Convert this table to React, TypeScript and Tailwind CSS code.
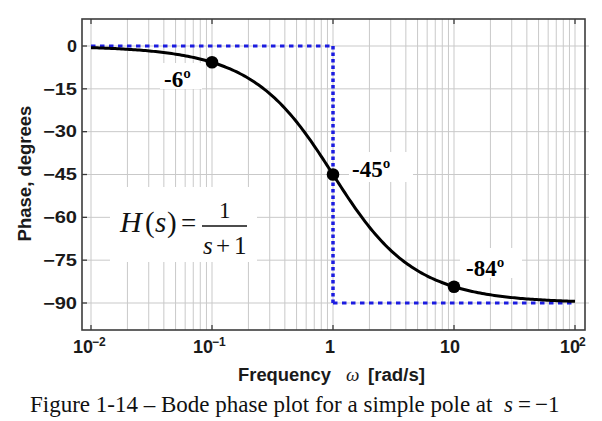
import React from "react";

const X = (w: number) => 91 + 121 * (Math.log10(w) + 2);
const Y = (deg: number) => 46 + (-deg * 257) / 90;

const sans = "'Liberation Sans', Arial, sans-serif";
const serif = "'Liberation Serif', 'Times New Roman', serif";

function Chart() {
  const vlines: number[] = [];
  for (let k = -2; k <= 1; k++) {
    for (let m = 1; m <= 9; m++) vlines.push(X(m * Math.pow(10, k)));
  }
  vlines.push(X(100));
  const majors = [0.01, 0.1, 1, 10, 100].map(X);
  const degs = [0, -15, -30, -45, -60, -75, -90];

  let d = "";
  for (let i = 0; i <= 240; i++) {
    const lw = -2 + (4 * i) / 240;
    const w = Math.pow(10, lw);
    const ph = (-Math.atan(w) * 180) / Math.PI;
    d += (i === 0 ? "M" : "L") + X(w).toFixed(2) + " " + Y(ph).toFixed(2) + " ";
  }
  const dots = [0.1, 1, 10].map((w) => ({ x: X(w), y: Y((-Math.atan(w) * 180) / Math.PI) }));

  return (
    <svg width={602} height={393} viewBox="0 0 602 393" className="block">
      <rect x={0} y={0} width={602} height={393} fill="#ffffff" />
      {/* grid */}
      {vlines.map((x, i) => (
        <line key={"v" + i} x1={x} y1={19} x2={x} y2={330} stroke="#c9c9c9" strokeWidth={1} />
      ))}
      {degs.map((g) => (
        <line key={"h" + g} x1={82} y1={Y(g)} x2={589} y2={Y(g)} stroke="#c9c9c9" strokeWidth={1} />
      ))}
      {/* frame */}
      <rect x={82} y={19} width={503} height={311} fill="none" stroke="#3c3c3c" strokeWidth={1.6} />
      {degs.map((g) => (
        <line key={"t" + g} x1={82} y1={Y(g)} x2={87} y2={Y(g)} stroke="#3c3c3c" strokeWidth={1.3} />
      ))}
      {majors.map((x, i) => (
        <g key={"m" + i}>
          <line x1={x} y1={19} x2={x} y2={24} stroke="#3c3c3c" strokeWidth={1.3} />
          <line x1={x} y1={325} x2={x} y2={330} stroke="#3c3c3c" strokeWidth={1.3} />
        </g>
      ))}
      {/* label boxes */}
      <rect x={110} y={187} width={147} height={75} fill="#ffffff" />
      <rect x={160} y={63} width={42} height={26} fill="#ffffff" />
      <rect x={349} y={152} width={64} height={30} fill="#ffffff" />
      <rect x={460} y={248} width={62} height={30} fill="#ffffff" />
      {/* asymptote */}
      <line x1={91} y1={Y(0)} x2={333} y2={Y(0)} stroke="#1c1ce0" strokeWidth={3} strokeDasharray="4.5 4.5" />
      <line x1={333} y1={Y(0)} x2={333} y2={Y(-90)} stroke="#1c1ce0" strokeWidth={3.5} strokeDasharray="3.5 3" />
      <line x1={333} y1={Y(-90)} x2={575} y2={Y(-90)} stroke="#1c1ce0" strokeWidth={3} strokeDasharray="4.5 4.5" />
      {/* curve */}
      <path d={d} fill="none" stroke="#000000" strokeWidth={3} strokeLinejoin="round" />
      {dots.map((p, i) => (
        <circle key={"d" + i} cx={p.x} cy={p.y} r={6.3} fill="#000000" />
      ))}
      {/* y tick labels */}
      {degs.map((g) => (
        <text
          key={"yl" + g}
          x={77}
          y={Y(g) + 5.7}
          textAnchor="end"
          fontFamily={sans}
          fontWeight={700}
          fontSize={16}
          fill="#1a1a1a"
          textLength={g === 0 ? 10 : 34}
          lengthAdjust="spacingAndGlyphs"
        >
          {g === 0 ? "0" : "\u2212" + String(-g)}
        </text>
      ))}
      {/* y axis title */}
      <text
        x={0}
        y={0}
        transform="translate(31 173.5) rotate(-90)"
        textAnchor="middle"
        fontFamily={sans}
        fontWeight={700}
        fontSize={18.5}
        fill="#1a1a1a"
      >
        Phase, degrees
      </text>
      {/* x tick labels */}
      <g fontFamily={sans} fontWeight={700} fill="#1a1a1a">
        <text x={73} y={353} fontSize={18}>10</text>
        <text x={92} y={346} fontSize={12}>{"\u2212"}2</text>
        <text x={193} y={353} fontSize={18}>10</text>
        <text x={212} y={346} fontSize={12}>{"\u2212"}1</text>
        <text x={325} y={353} fontSize={18}>1</text>
        <text x={440} y={353} fontSize={18}>10</text>
        <text x={560} y={353} fontSize={18}>10</text>
        <text x={579} y={346} fontSize={12}>2</text>
        <text x={238} y={381} fontSize={18} textLength={93} lengthAdjust="spacingAndGlyphs">Frequency</text>
        <text x={368} y={381} fontSize={18} textLength={57} lengthAdjust="spacingAndGlyphs">[rad/s]</text>
      </g>
      <text x={346} y={381} fontSize={19} fontFamily={serif} fontStyle="italic" fill="#1a1a1a">
        ω
      </text>
      {/* annotations */}
      <g fontFamily={serif} fontWeight={700} fontSize={23} fill="#000000">
        <text x={164} y={87}>-6º</text>
        <text x={352} y={177}>-45º</text>
        <text x={466} y={276}>-84º</text>
      </g>
      {/* transfer function */}
      <g fontFamily={serif} fill="#111111">
        <text x={120} y={232} fontSize={30} fontStyle="italic">H</text>
        <text x={145} y={232} fontSize={29}>(</text>
        <text x={155} y={232} fontSize={29} fontStyle="italic">s</text>
        <text x={167} y={232} fontSize={29}>)</text>
        <text x={181} y={232} fontSize={27}>=</text>
        <line x1={202} y1={226} x2={247} y2={226} stroke="#111111" strokeWidth={1.4} />
        <text x={219} y={218} fontSize={23}>1</text>
        <text x={203} y={254} fontSize={25} fontStyle="italic">s</text>
        <text x={216} y={254} fontSize={25}>+</text>
        <text x={234} y={254} fontSize={25}>1</text>
      </g>
    </svg>
  );
}

export default function App() {
  return (
    <div className="w-[602px] h-[421px] bg-white overflow-hidden">
      <Chart />
      <div
        className="pl-[30px] text-[23px] leading-none whitespace-nowrap text-[#111111]"
        style={{ fontFamily: serif }}
      >
        Figure 1-14 – Bode phase plot for a simple pole at&nbsp; <span className="italic">s</span>
        <span className="ml-[5px]">=</span>
        <span className="ml-[4px]">−1</span>
      </div>
    </div>
  );
}
